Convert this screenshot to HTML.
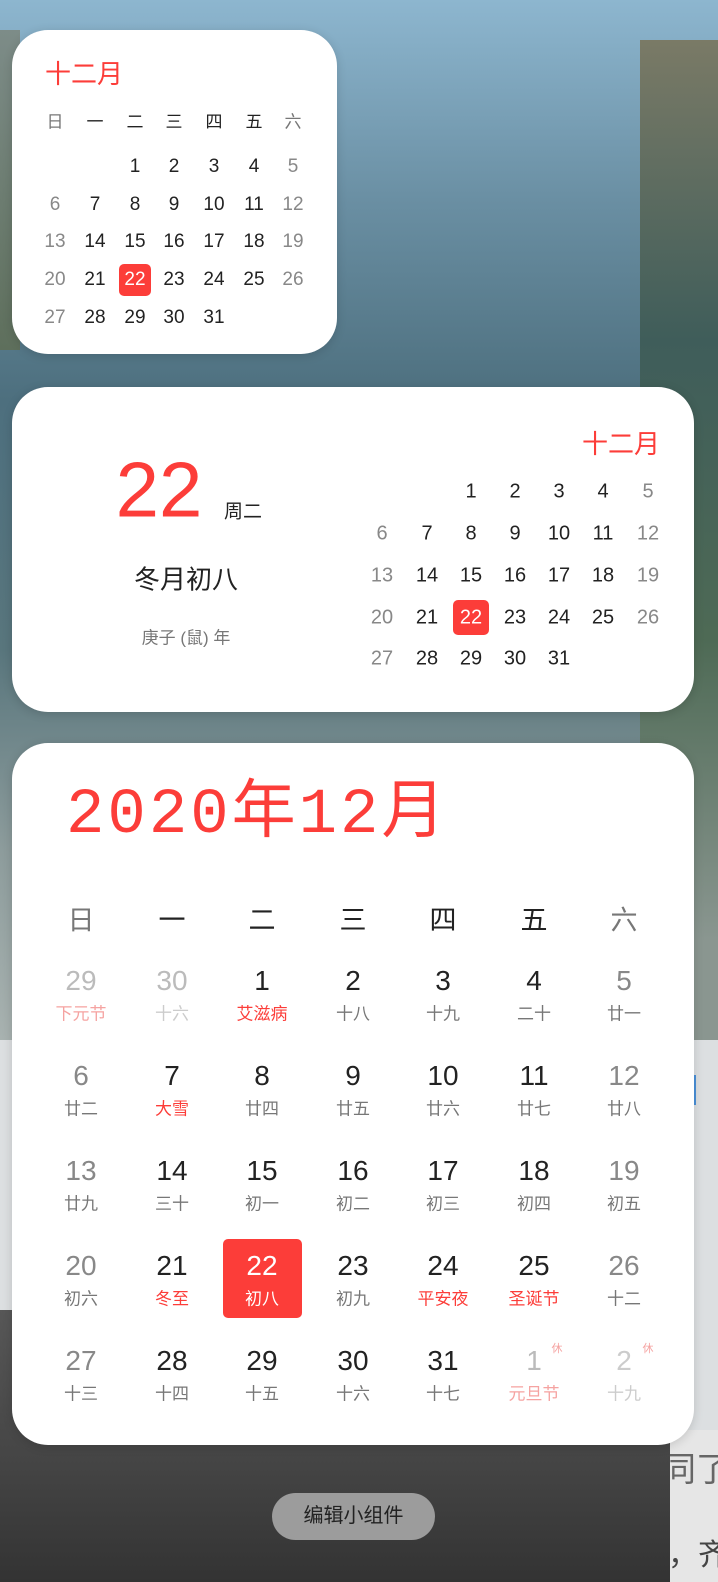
<!DOCTYPE html>
<html><head><meta charset="utf-8"><style>
*{margin:0;padding:0;box-sizing:border-box}
html,body{width:718px;height:1582px;overflow:hidden}
body{position:relative;font-family:"Liberation Sans","Noto Sans CJK SC",sans-serif;background:#6f8a90}
.bg{position:absolute;white-space:nowrap}
.w{position:absolute;background:#fff;box-shadow:0 2px 10px rgba(0,0,0,.15)}
.c{position:absolute;text-align:center;transform:translate(-50%,-50%);white-space:nowrap}
.red{color:#fc3d39}
</style></head><body>
<div class="bg" style="left:0;top:0;width:718px;height:1050px;background:linear-gradient(180deg,#8db6cf 0px,#6a8fa3 200px,#4d6f7e 400px,#59767d 650px,#8d9c9c 850px,#a8b2b0 1040px)"></div>
<div class="bg" style="left:640px;top:40px;width:78px;height:1000px;background:linear-gradient(180deg,#7a7a66,#3f5d5a 300px,#4e6a55 600px,#8a9690 900px)"></div>
<div class="bg" style="left:0;top:30px;width:20px;height:320px;background:linear-gradient(180deg,#7d8c88,#5e6f5c)"></div>
<div class="bg" style="left:0;top:1040px;width:718px;height:542px;background:#dcdfe1"></div>
<div class="bg" style="left:0;top:1310px;width:670px;height:272px;background:linear-gradient(180deg,#575757,#454545 150px,#333 272px)"></div>
<div class="bg" style="left:670px;top:1430px;width:48px;height:152px;background:#e6e6e6;overflow:hidden">
<div class="bg" style="left:-8px;top:12px;font-size:34px;color:#666">同了</div>
<div class="bg" style="left:-2px;top:100px;font-size:30px;color:#444">，齐</div>
</div>
<div class="bg" style="left:690px;top:1075px;width:6px;height:30px;background:#4a90d9"></div>

<!-- widget 1 -->
<div class="w" style="left:12px;top:30px;width:325px;height:324px;border-radius:36px"></div>
<div class="bg red" style="left:45px;top:54px;font-size:26px">十二月</div>
<div style="position:absolute;left:0;top:0;font-size:19px;color:#222">
<div class="c" style="left:55px;top:120px;color:#777;font-size:17px">日</div><div class="c" style="left:95px;top:120px;font-size:17px">一</div><div class="c" style="left:135px;top:120px;font-size:17px">二</div><div class="c" style="left:174px;top:120px;font-size:17px">三</div><div class="c" style="left:214px;top:120px;font-size:17px">四</div><div class="c" style="left:254px;top:120px;font-size:17px">五</div><div class="c" style="left:293px;top:120px;color:#777;font-size:17px">六</div>
<div class="c" style="left:135px;top:167px">1</div><div class="c" style="left:174px;top:167px">2</div><div class="c" style="left:214px;top:167px">3</div><div class="c" style="left:254px;top:167px">4</div><div class="c" style="left:293px;top:167px;color:#888">5</div>
<div class="c" style="left:55px;top:205px;color:#888">6</div><div class="c" style="left:95px;top:205px">7</div><div class="c" style="left:135px;top:205px">8</div><div class="c" style="left:174px;top:205px">9</div><div class="c" style="left:214px;top:205px">10</div><div class="c" style="left:254px;top:205px">11</div><div class="c" style="left:293px;top:205px;color:#888">12</div>
<div class="c" style="left:55px;top:242px;color:#888">13</div><div class="c" style="left:95px;top:242px">14</div><div class="c" style="left:135px;top:242px">15</div><div class="c" style="left:174px;top:242px">16</div><div class="c" style="left:214px;top:242px">17</div><div class="c" style="left:254px;top:242px">18</div><div class="c" style="left:293px;top:242px;color:#888">19</div>
<div class="c" style="left:55px;top:280px;color:#888">20</div><div class="c" style="left:95px;top:280px">21</div>
<div style="position:absolute;left:119px;top:264px;width:32px;height:32px;background:#fc3d39;border-radius:5px"></div>
<div class="c" style="left:135px;top:280px;color:#fff">22</div><div class="c" style="left:174px;top:280px">23</div><div class="c" style="left:214px;top:280px">24</div><div class="c" style="left:254px;top:280px">25</div><div class="c" style="left:293px;top:280px;color:#888">26</div>
<div class="c" style="left:55px;top:318px;color:#888">27</div><div class="c" style="left:95px;top:318px">28</div><div class="c" style="left:135px;top:318px">29</div><div class="c" style="left:174px;top:318px">30</div><div class="c" style="left:214px;top:318px">31</div>
</div>

<!-- widget 2 -->
<div class="w" style="left:12px;top:387px;width:682px;height:325px;border-radius:36px"></div>
<div class="c red" style="left:159px;top:490px;font-size:78px">22</div>
<div class="c" style="left:243px;top:510px;font-size:19px;color:#222">周二</div>
<div class="c" style="left:186px;top:578px;font-size:26px;color:#222">冬月初八</div>
<div class="c" style="left:186px;top:636px;font-size:17px;color:#777">庚子 (鼠) 年</div>
<div class="bg red" style="right:58px;top:424px;font-size:26px">十二月</div>
<div style="position:absolute;left:0;top:0;font-size:20px;color:#222">
<div class="c" style="left:471px;top:492px">1</div><div class="c" style="left:515px;top:492px">2</div><div class="c" style="left:559px;top:492px">3</div><div class="c" style="left:603px;top:492px">4</div><div class="c" style="left:648px;top:492px;color:#888">5</div>
<div class="c" style="left:382px;top:534px;color:#888">6</div><div class="c" style="left:427px;top:534px">7</div><div class="c" style="left:471px;top:534px">8</div><div class="c" style="left:515px;top:534px">9</div><div class="c" style="left:559px;top:534px">10</div><div class="c" style="left:603px;top:534px">11</div><div class="c" style="left:648px;top:534px;color:#888">12</div>
<div class="c" style="left:382px;top:576px;color:#888">13</div><div class="c" style="left:427px;top:576px">14</div><div class="c" style="left:471px;top:576px">15</div><div class="c" style="left:515px;top:576px">16</div><div class="c" style="left:559px;top:576px">17</div><div class="c" style="left:603px;top:576px">18</div><div class="c" style="left:648px;top:576px;color:#888">19</div>
<div class="c" style="left:382px;top:618px;color:#888">20</div><div class="c" style="left:427px;top:618px">21</div>
<div style="position:absolute;left:453px;top:600px;width:36px;height:35px;background:#fc3d39;border-radius:5px"></div>
<div class="c" style="left:471px;top:618px;color:#fff">22</div><div class="c" style="left:515px;top:618px">23</div><div class="c" style="left:559px;top:618px">24</div><div class="c" style="left:603px;top:618px">25</div><div class="c" style="left:648px;top:618px;color:#888">26</div>
<div class="c" style="left:382px;top:659px;color:#888">27</div><div class="c" style="left:427px;top:659px">28</div><div class="c" style="left:471px;top:659px">29</div><div class="c" style="left:515px;top:659px">30</div><div class="c" style="left:559px;top:659px">31</div>
</div>

<!-- widget 3 -->
<div class="w" style="left:12px;top:743px;width:682px;height:702px;border-radius:36px"></div>
<div class="bg red" style="left:66px;top:776px;font-size:64px;font-family:'Liberation Mono','Noto Sans CJK SC',monospace;letter-spacing:3px;line-height:80px">2020年12月</div>
<div style="position:absolute;left:0;top:0;font-size:27px;color:#222">
<div class="c" style="left:81px;top:918px;color:#777">日</div><div class="c" style="left:172px;top:918px">一</div><div class="c" style="left:262px;top:918px">二</div><div class="c" style="left:353px;top:918px">三</div><div class="c" style="left:443px;top:918px">四</div><div class="c" style="left:534px;top:918px">五</div><div class="c" style="left:624px;top:918px;color:#777">六</div>
</div>
<div style="position:absolute;left:0;top:0;font-size:28px;color:#222">
<div class="c" style="left:81px;top:981px;color:#bbb">29</div><div class="c" style="left:81px;top:1012px;font-size:17px;color:#f5a3a1">下元节</div>
<div class="c" style="left:172px;top:981px;color:#bbb">30</div><div class="c" style="left:172px;top:1012px;font-size:17px;color:#ccc">十六</div>
<div class="c" style="left:262px;top:981px">1</div><div class="c red" style="left:262px;top:1012px;font-size:17px">艾滋病</div>
<div class="c" style="left:353px;top:981px">2</div><div class="c" style="left:353px;top:1012px;font-size:17px;color:#777">十八</div>
<div class="c" style="left:443px;top:981px">3</div><div class="c" style="left:443px;top:1012px;font-size:17px;color:#777">十九</div>
<div class="c" style="left:534px;top:981px">4</div><div class="c" style="left:534px;top:1012px;font-size:17px;color:#777">二十</div>
<div class="c" style="left:624px;top:981px;color:#888">5</div><div class="c" style="left:624px;top:1012px;font-size:17px;color:#777">廿一</div>
<div class="c" style="left:81px;top:1076px;color:#888">6</div><div class="c" style="left:81px;top:1107px;font-size:17px;color:#777">廿二</div>
<div class="c" style="left:172px;top:1076px">7</div><div class="c red" style="left:172px;top:1107px;font-size:17px">大雪</div>
<div class="c" style="left:262px;top:1076px">8</div><div class="c" style="left:262px;top:1107px;font-size:17px;color:#777">廿四</div>
<div class="c" style="left:353px;top:1076px">9</div><div class="c" style="left:353px;top:1107px;font-size:17px;color:#777">廿五</div>
<div class="c" style="left:443px;top:1076px">10</div><div class="c" style="left:443px;top:1107px;font-size:17px;color:#777">廿六</div>
<div class="c" style="left:534px;top:1076px">11</div><div class="c" style="left:534px;top:1107px;font-size:17px;color:#777">廿七</div>
<div class="c" style="left:624px;top:1076px;color:#888">12</div><div class="c" style="left:624px;top:1107px;font-size:17px;color:#777">廿八</div>
<div class="c" style="left:81px;top:1171px;color:#888">13</div><div class="c" style="left:81px;top:1202px;font-size:17px;color:#777">廿九</div>
<div class="c" style="left:172px;top:1171px">14</div><div class="c" style="left:172px;top:1202px;font-size:17px;color:#777">三十</div>
<div class="c" style="left:262px;top:1171px">15</div><div class="c" style="left:262px;top:1202px;font-size:17px;color:#777">初一</div>
<div class="c" style="left:353px;top:1171px">16</div><div class="c" style="left:353px;top:1202px;font-size:17px;color:#777">初二</div>
<div class="c" style="left:443px;top:1171px">17</div><div class="c" style="left:443px;top:1202px;font-size:17px;color:#777">初三</div>
<div class="c" style="left:534px;top:1171px">18</div><div class="c" style="left:534px;top:1202px;font-size:17px;color:#777">初四</div>
<div class="c" style="left:624px;top:1171px;color:#888">19</div><div class="c" style="left:624px;top:1202px;font-size:17px;color:#777">初五</div>
<div style="position:absolute;left:223px;top:1239px;width:79px;height:79px;background:#fc3d39;border-radius:5px"></div>
<div class="c" style="left:81px;top:1266px;color:#888">20</div><div class="c" style="left:81px;top:1297px;font-size:17px;color:#777">初六</div>
<div class="c" style="left:172px;top:1266px">21</div><div class="c red" style="left:172px;top:1297px;font-size:17px">冬至</div>
<div class="c" style="left:262px;top:1266px;color:#fff">22</div><div class="c" style="left:262px;top:1297px;font-size:17px;color:#fff">初八</div>
<div class="c" style="left:353px;top:1266px">23</div><div class="c" style="left:353px;top:1297px;font-size:17px;color:#777">初九</div>
<div class="c" style="left:443px;top:1266px">24</div><div class="c red" style="left:443px;top:1297px;font-size:17px">平安夜</div>
<div class="c" style="left:534px;top:1266px">25</div><div class="c red" style="left:534px;top:1297px;font-size:17px">圣诞节</div>
<div class="c" style="left:624px;top:1266px;color:#888">26</div><div class="c" style="left:624px;top:1297px;font-size:17px;color:#777">十二</div>
<div class="c" style="left:81px;top:1361px;color:#888">27</div><div class="c" style="left:81px;top:1392px;font-size:17px;color:#777">十三</div>
<div class="c" style="left:172px;top:1361px">28</div><div class="c" style="left:172px;top:1392px;font-size:17px;color:#777">十四</div>
<div class="c" style="left:262px;top:1361px">29</div><div class="c" style="left:262px;top:1392px;font-size:17px;color:#777">十五</div>
<div class="c" style="left:353px;top:1361px">30</div><div class="c" style="left:353px;top:1392px;font-size:17px;color:#777">十六</div>
<div class="c" style="left:443px;top:1361px">31</div><div class="c" style="left:443px;top:1392px;font-size:17px;color:#777">十七</div>
<div class="c" style="left:534px;top:1361px;color:#bbb">1</div><div class="c" style="left:534px;top:1392px;font-size:17px;color:#f5a3a1">元旦节</div><div class="c" style="left:557px;top:1348px;font-size:11px;color:#f5a3a1">休</div>
<div class="c" style="left:624px;top:1361px;color:#ccc">2</div><div class="c" style="left:624px;top:1392px;font-size:17px;color:#ccc">十九</div><div class="c" style="left:648px;top:1348px;font-size:11px;color:#f5a3a1">休</div>
</div>

<div style="position:absolute;left:272px;top:1493px;width:163px;height:47px;border-radius:24px;background:#9c9c9c;color:#222;font-size:20px;text-align:center;line-height:47px">编辑小组件</div>
</body></html>
